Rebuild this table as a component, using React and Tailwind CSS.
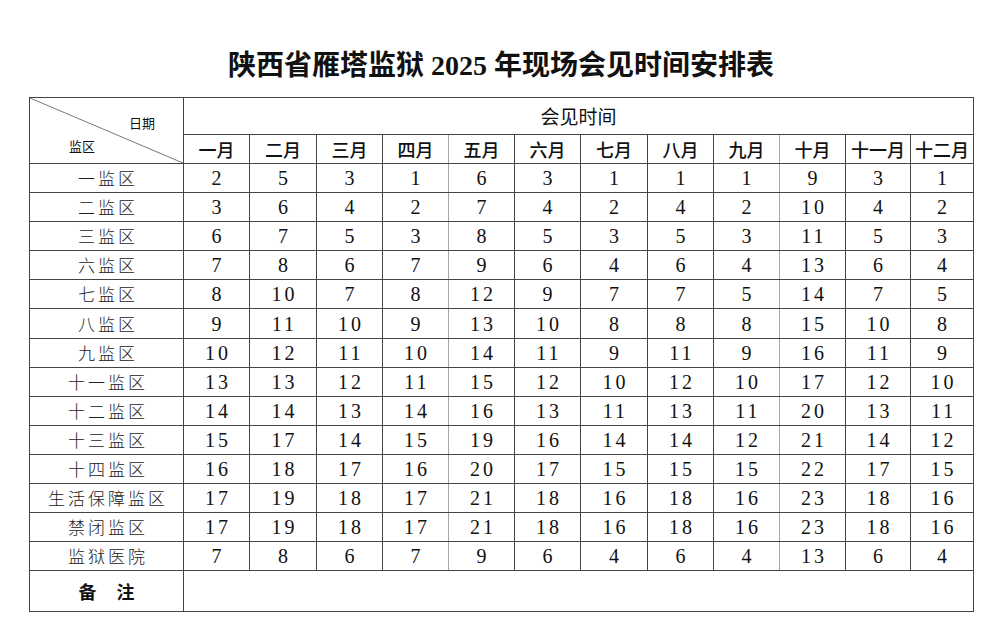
const months = ["一月", "二月", "三月", "四月", "五月", "六月", "七月", "八月", "九月", "十月", "十一月", "十二月"];
const widths = [66, 67, 66, 66, 66, 66, 67, 66, 66, 66, 65, 63];

const rows = [
  ["一监区", [2, 5, 3, 1, 6, 3, 1, 1, 1, 9, 3, 1]],
  ["二监区", [3, 6, 4, 2, 7, 4, 2, 4, 2, 10, 4, 2]],
  ["三监区", [6, 7, 5, 3, 8, 5, 3, 5, 3, 11, 5, 3]],
  ["六监区", [7, 8, 6, 7, 9, 6, 4, 6, 4, 13, 6, 4]],
  ["七监区", [8, 10, 7, 8, 12, 9, 7, 7, 5, 14, 7, 5]],
  ["八监区", [9, 11, 10, 9, 13, 10, 8, 8, 8, 15, 10, 8]],
  ["九监区", [10, 12, 11, 10, 14, 11, 9, 11, 9, 16, 11, 9]],
  ["十一监区", [13, 13, 12, 11, 15, 12, 10, 12, 10, 17, 12, 10]],
  ["十二监区", [14, 14, 13, 14, 16, 13, 11, 13, 11, 20, 13, 11]],
  ["十三监区", [15, 17, 14, 15, 19, 16, 14, 14, 12, 21, 14, 12]],
  ["十四监区", [16, 18, 17, 16, 20, 17, 15, 15, 15, 22, 17, 15]],
  ["生活保障监区", [17, 19, 18, 17, 21, 18, 16, 18, 16, 23, 18, 16]],
  ["禁闭监区", [17, 19, 18, 17, 21, 18, 16, 18, 16, 23, 18, 16]],
  ["监狱医院", [7, 8, 6, 7, 9, 6, 4, 6, 4, 13, 6, 4]],
];

const serif = "font-['Liberation_Serif','Noto_Sans_CJK_SC',serif]";
const sans = "font-['Noto_Sans_CJK_SC','Liberation_Sans',sans-serif]";

// columns 4 and 9 have a lighter right rule in the original
const cellBorder = (i) =>
  i === 3 || i === 8 ? "border border-[#444] border-r-[#a8a8a8]" : "border border-[#444]";

export default function App() {
  return (
    <div className="w-[1002px] h-[643px] bg-white text-[#111]">
      <div className={`h-[97px] pt-[50px] text-center text-[28px] leading-[32px] font-bold ${serif}`}>
        陕西省雁塔监狱 2025 年现场会见时间安排表
      </div>

      <table className="ml-[29px] w-[945px] table-fixed border-collapse">
        <colgroup>
          <col className="w-[154px]" />
          {widths.map((w, i) => (
            <col key={i} style={{ width: w }} />
          ))}
        </colgroup>
        <thead>
          <tr className="h-[36px]">
            <th rowSpan={2} className={`relative border border-[#444] p-0 align-top font-normal ${sans}`}>
              <svg className="absolute inset-0 w-full h-full" viewBox="0 0 154 65" preserveAspectRatio="none">
                <line x1="0" y1="0" x2="154" y2="65" stroke="#555" strokeWidth="0.8" />
              </svg>
              <div className="relative flex flex-col h-[65px] pt-[17px] text-[13px] leading-[16px]">
                <span className="self-end pr-[28px]">日期</span>
                <span className="self-start pl-[39px] mt-[7px]">监区</span>
              </div>
            </th>
            <th colSpan={12} className={`border border-[#444] p-0 text-[19px] font-normal leading-[22px] ${sans}`}>
              会见时间
            </th>
          </tr>
          <tr className="h-[29px]">
            {months.map((m, i) => (
              <th key={m} className={`${cellBorder(i)} p-0 text-[18px] font-medium leading-[20px] ${sans}`}>
                {m}
              </th>
            ))}
          </tr>
        </thead>
        <tbody>
          {rows.map(([name, vals]) => (
            <tr key={name} className="h-[29.1px]">
              <td className={`border border-[#444] p-0 pl-[3px] text-center text-[17px] leading-[20px] tracking-[3px] text-[#222] ${sans} font-light`}>
                {name}
              </td>
              {vals.map((v, i) => (
                <td key={i} className={`${cellBorder(i)} p-0 pl-[3px] text-center text-[20px] leading-[22px] tracking-[3px] ${serif}`}>
                  {v}
                </td>
              ))}
            </tr>
          ))}
          <tr className="h-[41px]">
            <td className={`border border-[#444] p-0 pl-[8px] text-center text-[18px] font-bold tracking-[8px] ${sans}`}>
              备 注
            </td>
            <td colSpan={12} className="border border-[#444]"></td>
          </tr>
        </tbody>
      </table>
    </div>
  );
}
